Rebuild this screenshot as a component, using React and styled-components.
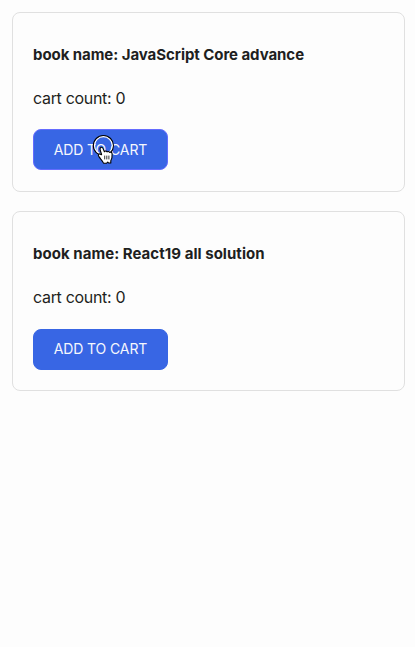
import { useState } from 'react';
import styled, { createGlobalStyle } from 'styled-components';

const books = [
  { id: 1, name: 'JavaScript Core advance', tracking: '-0.06px', pointed: true },
  { id: 2, name: 'React19 all solution', tracking: '0.04px', pointed: false },
];

const GlobalStyle = createGlobalStyle`
  * {
    box-sizing: border-box;
  }
  body {
    margin: 0;
    background-color: #fdfdfd;
    color: #1e1f21;
    font-family: Inter, Roboto, sans-serif;
    -webkit-font-smoothing: antialiased;
  }
`;

/**
 * A page container.
 */
const Page = styled.main`
  display: flex;
  flex-direction: column;
  gap: 19.9px;
  padding: 12px 10px 0 12px;
`;

/**
 * A bordered card for one book.
 */
const Card = styled.article`
  display: flex;
  flex-direction: column;
  align-items: flex-start;
  height: 179.5px;
  padding: 31px 20px 20px;
  border: 1px solid #e0e0e0;
  border-radius: 8px;
`;

const BookName = styled.h4`
  margin: 0;
  font-size: 15px;
  line-height: 22px;
  font-weight: 700;
  letter-spacing: ${({ $tracking }) => $tracking};
  white-space: nowrap;
`;

const CartCount = styled.p`
  margin: 20px 0 19.4px;
  font-size: 16px;
  line-height: 24px;
  letter-spacing: -0.32px;
`;

/**
 * A button with a lighter edge while it is pointed at.
 */
const CartButton = styled.button`
  position: relative;
  flex: none;
  width: 135px;
  height: 41px;
  padding: 0;
  border: 1px solid ${({ $pointed }) => ($pointed ? '#646cff' : '#3866e4')};
  border-radius: 8px;
  background-color: #3866e4;
  color: #f5f7fd;
  font-family: inherit;
  font-size: 14px;
  line-height: 20px;
  letter-spacing: -0.12px;
  cursor: pointer;
`;

/**
 * Lies over the button label.
 */
const Pointer = styled.svg`
  position: absolute;
  left: 57px;
  top: 3px;
  pointer-events: none;
`;

/**
 * A hand cursor with a click ring.
 */
function HandPointer() {
  return (
    <Pointer width="26" height="34" viewBox="0 0 26 34" aria-hidden="true">
      <circle cx="12.4" cy="12.6" r="9.9" fill="none" stroke="#000" strokeWidth="1.4" />
      <circle cx="12.4" cy="12.6" r="8.9" fill="none" stroke="#fff" strokeWidth="1.2" />
      <path
        d="M10.6 21.6 L9.1 16.6 C8.5 14.3 11.2 13.3 12.1 15.6 L13.4 18.8 C13.9 17.7 15.5 17.7 16 18.9 C16.7 18.1 18.1 18.4 18.5 19.4 C19.6 18.7 21 19.4 21.1 21 C21.3 23.8 20.8 26 19.8 27.8 L19.8 30 L17.6 30 L16.8 29 L15.7 30.2 L12.5 30.2 C11.9 28.2 9.6 26 7.9 23.7 C6.5 21.6 8.2 20.2 9.6 21.4 Z"
        fill="#fff"
        stroke="#000"
        strokeWidth="1.1"
        strokeLinejoin="round"
      />
      <path d="M13.7 22.6 V26.4 M15.8 22.6 V26.4 M17.9 22.6 V26.4" stroke="#000" strokeWidth="0.8" />
    </Pointer>
  );
}

/**
 * Renders a book with its own cart counter.
 */
function Book({ name, tracking, pointed }) {
  const [count, setCount] = useState(0);

  return (
    <Card>
      <BookName $tracking={tracking}>book name: {name}</BookName>
      <CartCount>cart count: {count}</CartCount>
      <CartButton $pointed={pointed} onClick={() => setCount(count + 1)}>
        ADD TO CART
        {pointed && <HandPointer />}
      </CartButton>
    </Card>
  );
}

export default function App() {
  return (
    <>
      <GlobalStyle />
      <Page>
        {books.map((book) => (
          <Book key={book.id} name={book.name} tracking={book.tracking} pointed={book.pointed} />
        ))}
      </Page>
    </>
  );
}
